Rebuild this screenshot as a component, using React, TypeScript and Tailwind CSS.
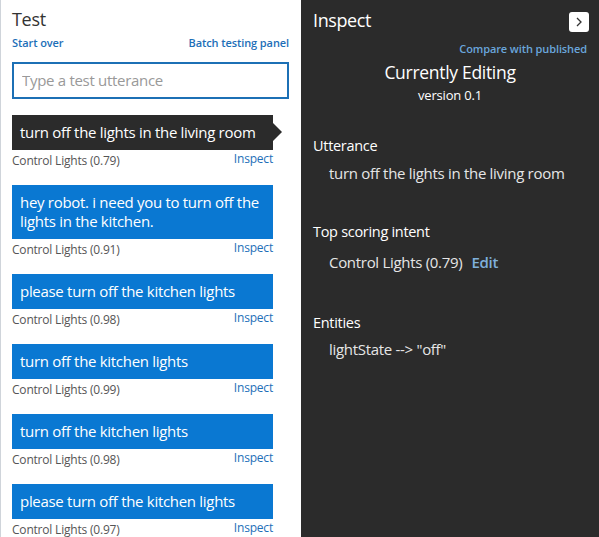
const font = { fontFamily: '"Open Sans", "Noto Sans", sans-serif' };

const results = [
  { text: "turn off the lights in the living room", score: "0.79", active: true },
  { text: "hey robot. i need you to turn off the lights in the kitchen.", score: "0.91" },
  { text: "please turn off the kitchen lights", score: "0.98" },
  { text: "turn off the kitchen lights", score: "0.99" },
  { text: "turn off the kitchen lights", score: "0.98" },
  { text: "please turn off the kitchen lights", score: "0.97" },
];

function ResultItem({ r }: { r: (typeof results)[0] }) {
  return (
    <div className="mr-4 mb-[15px]">
      <div
        className={`relative px-2 py-2 text-[15px] leading-[19px] tracking-[-0.3px] text-white ${
          r.active ? "bg-[#2b2b2b]" : "bg-[#0a78d2]"
        }`}
      >
        {r.text}
        {r.active && (
          <span className="absolute top-1/2 -right-[9px] -translate-y-1/2 border-y-[9px] border-l-[9px] border-y-transparent border-l-[#2b2b2b]" />
        )}
      </div>
      <div className="flex justify-between items-start h-5 text-[12px] tracking-[-0.2px]">
        <span className="mt-[2px] text-[#555]">Control Lights ({r.score})</span>
        <span className="text-[#1d6fb8]">Inspect</span>
      </div>
    </div>
  );
}

export default function App() {
  return (
    <div className="flex w-[599px] h-[537px] overflow-hidden" style={font}>
      <div className="w-[301px] h-full bg-white border-l border-[#cfd4da] pl-[11px] pr-3 overflow-hidden">
        <h1 className="pt-[7px] text-[18px] leading-6 text-[#333] tracking-[-0.3px]">Test</h1>
        <div className="mt-[4px] flex justify-between text-[11px] font-semibold text-[#1d6fb8] tracking-[-0.1px]">
          <span>Start over</span>
          <span>Batch testing panel</span>
        </div>
        <input
          className="mt-[10px] w-full h-[37px] border-2 border-[#1c70b5] px-2 text-[15px] text-[#333] placeholder:text-[#999] outline-none tracking-[-0.3px]"
          placeholder="Type a test utterance"
        />
        <div className="mt-4">
          {results.map((r, i) => (
            <ResultItem key={i} r={r} />
          ))}
        </div>
      </div>

      <div className="flex-1 h-full bg-[#2b2b2b] text-white px-3">
        <div className="flex justify-between items-center pt-[8px]">
          <h2 className="text-[18px] leading-6 tracking-[-0.4px]">Inspect</h2>
          <button className="w-5 h-5 mt-[3px] mr-[-2px] bg-white rounded-[3px] flex items-center justify-center">
            <svg width="10" height="10" viewBox="0 0 10 10" fill="none" stroke="#333" strokeWidth="1.3">
              <path d="M3 1 L7 5 L3 9" />
            </svg>
          </button>
        </div>
        <div className="mt-[9px] text-right text-[11px] font-semibold text-[#6aa6dc] tracking-[-0.1px]">
          Compare with published
        </div>
        <div className="mt-[2px] text-center text-[17.5px] leading-6 tracking-[-0.3px]">Currently Editing</div>
        <div className="text-center text-[13px] leading-5 mt-[1px] tracking-[-0.2px]">version 0.1</div>

        <div className="mt-[31px] tracking-[-0.3px]">
          <div className="text-[14.5px] leading-5">Utterance</div>
          <div className="mt-[7px] pl-4 text-[15px] leading-5 text-[#e6e6e6]">turn off the lights in the living room</div>

          <div className="mt-[39px] text-[14.5px] leading-5">Top scoring intent</div>
          <div className="mt-[10px] pl-4 text-[15px] leading-5 text-[#e6e6e6]">
            Control Lights (0.79)
            <span className="ml-[9px] font-semibold text-[#7fb0dc]">Edit</span>
          </div>

          <div className="mt-[41px] text-[14.5px] leading-5">Entities</div>
          <div className="mt-[6px] pl-4 text-[15px] leading-5 text-[#e6e6e6]">lightState --&gt; "off"</div>
        </div>
      </div>
    </div>
  );
}
